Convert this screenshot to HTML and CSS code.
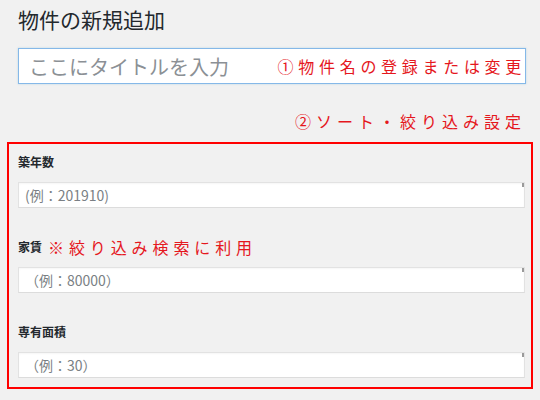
FILE: index.html
```html
<!DOCTYPE html>
<html lang="ja">
<head>
<meta charset="utf-8">
<title>物件の新規追加</title>
<link rel="stylesheet" href="styles.css">
</head>
<body>
<div class="page">
  <h1 class="title">物件の新規追加</h1>
  <div class="title-input">
    <span class="ph-lg">ここにタイトルを入力</span>
    <span class="note note1">①物件名の登録または変更</span>
  </div>
  <div class="note note2">②ソート・絞り込み設定</div>
  <div class="box">
    <div class="field">
      <div class="label">築年数</div>
      <div class="input"><span class="ph">(例：201910)</span><span class="thumb"></span></div>
    </div>
    <div class="field">
      <div class="label">家賃 <span class="note note3">※絞り込み検索に利用</span></div>
      <div class="input"><span class="ph">（例：80000）</span><span class="thumb"></span></div>
    </div>
    <div class="field">
      <div class="label">専有面積</div>
      <div class="input"><span class="ph">（例：30）</span><span class="thumb"></span></div>
    </div>
  </div>
</div>
</body>
</html>
```

FILE: styles.css
```css
* { box-sizing: border-box; }
html, body {
  margin: 0;
  padding: 0;
  background: #f1f1f1;
  font-family: "Noto Sans CJK JP", "Noto Sans", sans-serif;
}
.page {
  width: 540px;
  height: 400px;
  padding: 0 7px;
  overflow: hidden;
}
.title {
  margin: 0 0 0 11px;
  padding-top: 5px;
  font-size: 21px;
  line-height: 28px;
  font-weight: 400;
  color: #23282d;
}
.title-input {
  margin: 15px 7px 0 11px;
  height: 36px;
  border: 1px solid #85b8e8;
  background: #fff;
  display: flex;
  align-items: center;
  justify-content: space-between;
  padding: 0 0 0 10px;
  box-shadow: 0 0 2px rgba(30, 140, 190, .25);
}
.ph-lg {
  font-size: 20px;
  color: #8b9095;
}
.note {
  color: #e5171d;
  font-size: 16px;
  line-height: 20px;
}
.note1 {
  letter-spacing: 4.7px;
  margin-right: -1px;
}
.note2 {
  margin-top: 27px;
  text-align: right;
  letter-spacing: 5px;
  padding-right: 7px;
}
.note3 {
  font-weight: 400;
  letter-spacing: 4.9px;
  margin-left: 6px;
}
.box {
  margin-top: 11px;
  border: 2px solid #ff0000;
  padding: 8px 6px 9px 9px;
  display: flex;
  flex-direction: column;
  gap: 29px;
}
.field {
  display: flex;
  flex-direction: column;
  gap: 10px;
}
.label {
  font-size: 12px;
  line-height: 20px;
  font-weight: 700;
  color: #23282d;
  display: flex;
  align-items: center;
}
.input {
  position: relative;
  height: 26px;
  background: #fff;
  border: 1px solid #e2e2e2;
  border-bottom-color: #dcdcdc;
  box-shadow: inset 0 1px 2px rgba(0, 0, 0, .04);
  display: flex;
  align-items: center;
  padding-left: 6px;
}
.ph {
  font-size: 14px;
  color: #7a7f84;
}
.thumb {
  position: absolute;
  right: 0;
  top: 0;
  width: 2px;
  height: 4px;
  background: #9a9a9a;
}
```
